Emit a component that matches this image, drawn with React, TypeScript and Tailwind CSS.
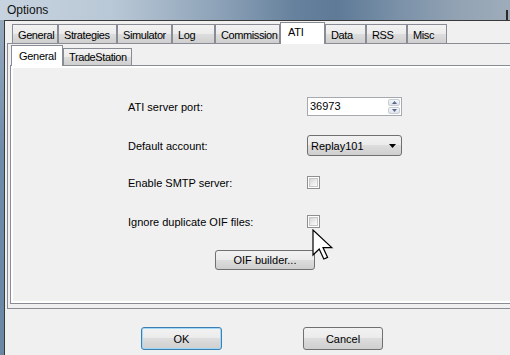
import React from "react";

const outerTabs = [
  { label: "General", cls: "w-[46px]" },
  { label: "Strategies", cls: "w-[59px]" },
  { label: "Simulator", cls: "w-[55px]" },
  { label: "Log", cls: "w-[43px]" },
  { label: "Commission", cls: "w-[65px]" },
  { label: "ATI", cls: "w-[45px]", sel: true },
  { label: "Data", cls: "w-[41px]" },
  { label: "RSS", cls: "w-[41px]" },
  { label: "Misc", cls: "w-[40px]" },
];

const tabBg =
  "bg-[linear-gradient(to_bottom,#f3f3f3_0%,#ebebeb_50%,#dddddd_51%,#cfcfcf_100%)]";
const btnBg =
  "bg-[linear-gradient(to_bottom,#f2f2f2_0%,#ebebeb_48%,#dddddd_50%,#cfcfcf_100%)]";

function Tab({ label, cls, sel }: { label: string; cls: string; sel?: boolean }) {
  if (sel) {
    return (
      <div
        className={`${cls} shrink-0 h-[22px] -mb-px relative z-10 bg-white border border-b-0 border-[#898c95] pl-[7px] pt-[2px] text-[11px] leading-[14px] tracking-[-0.3px] whitespace-nowrap`}
      >
        {label}
      </div>
    );
  }
  return (
    <div
      className={`${cls} shrink-0 h-[19px] ${tabBg} border border-b-0 border-[#898c95] pl-[5px] pt-[3px] text-[11px] leading-[14px] tracking-[-0.4px] whitespace-nowrap overflow-hidden`}
    >
      {label}
    </div>
  );
}

function Checkbox() {
  return (
    <div className="w-[13px] h-[13px] border border-[#8e8f8f] bg-white p-[1px]">
      <div className="w-full h-full border border-[#c6c6c6] bg-[linear-gradient(135deg,#d6d6d6_0%,#eeeeee_60%,#fbfbfb_100%)]" />
    </div>
  );
}

function Spinner() {
  return (
    <div className="w-[95px] h-[19px] border border-[#a6a9b0] bg-white flex">
      <div className="flex-1 pl-[2px] text-[11px] leading-[17px]">36973</div>
      <div className="w-[13px] flex flex-col py-[1px] pr-[1px] gap-[1px]">
        <div className="flex-1 rounded-[2px] border border-[#c8ced8] bg-[linear-gradient(to_bottom,#f5f6f8,#dfe3ea)] flex items-center justify-center">
          <svg width="5" height="3" viewBox="0 0 5 3">
            <path d="M0 3 L2.5 0 L5 3 Z" fill="#56698a" />
          </svg>
        </div>
        <div className="flex-1 rounded-[2px] border border-[#c8ced8] bg-[linear-gradient(to_bottom,#f5f6f8,#dfe3ea)] flex items-center justify-center">
          <svg width="5" height="3" viewBox="0 0 5 3">
            <path d="M0 0 L2.5 3 L5 0 Z" fill="#56698a" />
          </svg>
        </div>
      </div>
    </div>
  );
}

function Combo() {
  return (
    <div
      className={`w-[95px] h-[21px] rounded-[3px] border border-[#707070] ${btnBg} flex items-center pl-[3px] pr-[5px]`}
    >
      <div className="flex-1 text-[11px] leading-[14px]">Replay101</div>
      <svg width="7" height="4" viewBox="0 0 7 4">
        <path d="M0 0 L7 0 L3.5 4 Z" fill="#000" />
      </svg>
    </div>
  );
}

function Cursor() {
  return (
    <svg
      className="absolute left-[312px] top-[229px] z-20"
      width="22"
      height="32"
      viewBox="0 0 22 32"
    >
      <path
        d="M1 1 L1 26 L7.2 20 L11.8 30 L15.6 28.4 L11 18.6 L19.8 18.6 Z"
        fill="#ffffff"
        stroke="#000000"
        strokeWidth="1.2"
        strokeLinejoin="miter"
      />
    </svg>
  );
}

export default function App() {
  return (
    <div className="relative w-[510px] h-[355px] overflow-hidden bg-[#f0f0f0] text-black font-['Liberation_Sans',Arial,sans-serif]">
      {/* title bar */}
      <div className="h-[20px] flex items-center justify-between pl-[7px] bg-[linear-gradient(to_right,#c7d3df_0%,#b9c8d6_22%,#8fa4b9_42%,#66819d_58%,#5e7a97_66%,#7a91a8_78%,#93a3b4_90%,#9eacba_100%)]">
        <span className="text-[12px] leading-[16px] text-[#111]">Options</span>
        <div className="w-[2px] h-[10px] mt-[10px] mr-[2px] bg-[#2a2a2a]" />
      </div>

      <div className="flex h-[335px]">
        {/* left frame */}
        <div className="w-[4px] shrink-0 bg-[linear-gradient(to_bottom,#94a9be,#6e8ba9_40%,#6a87a6)]" />
        {/* client */}
        <div className="flex-1 min-w-0 border-l border-t border-[#3a3a3a] bg-[#f0f0f0] pl-[2px]">
          {/* outer tab strip */}
          <div className="flex items-end h-[22px] pl-[5px]">
            {outerTabs.map((t) => (
              <Tab key={t.label} label={t.label} cls={t.cls} sel={t.sel} />
            ))}
          </div>
          {/* outer panel */}
          <div className="w-[520px] h-[266px] border border-[#898c95] bg-[#f0f0f0] pl-[2px]">
            {/* inner tab strip */}
            <div className="flex items-end h-[21px] pl-[1px]">
              <div className="w-[52px] h-[21px] -mb-px relative z-10 bg-white border border-b-0 border-[#898c95] pl-[7px] pt-[3px] text-[11px] leading-[14px] tracking-[-0.3px]">
                General
              </div>
              <div className={`w-[69px] h-[17px] ${tabBg} border border-b-0 border-[#898c95] pl-[5px] pt-[1px] text-[11px] leading-[14px] tracking-[-0.4px] whitespace-nowrap overflow-hidden`}>
                TradeStation
              </div>
            </div>
            {/* inner panel */}
            <div className="h-[239px] border border-[#898c95] bg-white p-[2px]">
              <div className="h-full bg-[#f0f0f0] pt-[28px] pl-[115px]">
                <div className="flex items-center h-[21px]">
                  <div className="w-[179px] text-[11px] leading-[14px]">ATI server port:</div>
                  <Spinner />
                </div>
                <div className="flex items-center h-[21px] mt-[18px]">
                  <div className="w-[179px] text-[11px] leading-[14px]">Default account:</div>
                  <Combo />
                </div>
                <div className="flex items-center h-[21px] mt-[16px]">
                  <div className="w-[179px] text-[11px] leading-[14px]">Enable SMTP server:</div>
                  <Checkbox />
                </div>
                <div className="flex items-center h-[21px] mt-[18px]">
                  <div className="w-[179px] text-[11px] leading-[14px]">Ignore duplicate OIF files:</div>
                  <Checkbox />
                </div>
                <div className="mt-[18px] ml-[87px]">
                  <div className={`w-[100px] h-[20px] rounded-[3px] border border-[#707070] ${btnBg} flex items-center justify-center text-[11px] leading-[14px]`}>
                    OIF builder...
                  </div>
                </div>
              </div>
            </div>
          </div>
          {/* bottom buttons */}
          <div className="flex pt-[18px] pl-[134px]">
            <div className={`w-[81px] h-[23px] rounded-[3px] border border-[#3c7fb1] shadow-[inset_0_0_0_1px_#9fd9f7] ${btnBg} flex items-center justify-center text-[11px] leading-[14px]`}>
              OK
            </div>
            <div className={`ml-[81px] w-[80px] h-[23px] rounded-[3px] border border-[#707070] ${btnBg} flex items-center justify-center text-[11px] leading-[14px]`}>
              Cancel
            </div>
          </div>
        </div>
      </div>
      <Cursor />
    </div>
  );
}
